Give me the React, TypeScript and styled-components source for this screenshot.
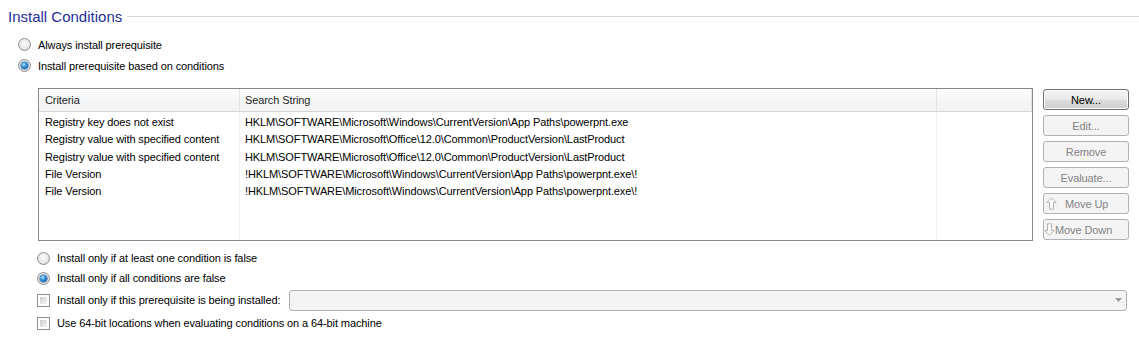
import React from "react";
import styled, { createGlobalStyle, css } from "styled-components";

const Global = createGlobalStyle`
  html, body { margin: 0; padding: 0; background: #ffffff; }
  body { font-family: "Liberation Sans", Arial, sans-serif; font-size: 11px; color: #000; letter-spacing: -0.1px; }
`;

const Page = styled.div`
  width: 1139px;
  height: 343px;
  overflow: hidden;
  background: #fff;
`;

const TitleRow = styled.div`
  display: flex;
  align-items: center;
  height: 32px;
  padding-left: 8px;
`;

const Title = styled.div`
  font-size: 15px;
  letter-spacing: 0;
  color: #26309a;
  white-space: nowrap;
`;

const TitleLine = styled.div`
  flex: 1;
  height: 1px;
  margin-left: 5px;
  background: #d5d5d5;
`;

const OptionGroup = styled.div<{ $indent: number; $top: number }>`
  display: flex;
  flex-direction: column;
  padding-left: ${(p) => p.$indent}px;
  padding-top: ${(p) => p.$top}px;
`;

const OptionRow = styled.label<{ $h: number }>`
  display: flex;
  align-items: center;
  height: ${(p) => p.$h}px;
  gap: 7px;
  white-space: nowrap;
`;

const ComboRow = styled(OptionRow)`
  width: 1090px;
`;

const RadioMark = styled.span<{ $checked?: boolean }>`
  box-sizing: border-box;
  width: 13px;
  height: 13px;
  border-radius: 50%;
  border: 1px solid #8c8e90;
  background: radial-gradient(circle at 50% 40%, #fbfbfb 0%, #e6e6e6 60%, #d0d0d0 100%);
  display: flex;
  align-items: center;
  justify-content: center;
  flex: none;
  ${(p) =>
    p.$checked &&
    css`
      &::after {
        content: "";
        width: 7px;
        height: 7px;
        border-radius: 50%;
        background: radial-gradient(circle at 40% 35%, #aee6ff 0%, #2a8ad4 45%, #0d4c8c 100%);
        box-shadow: 0 0 0 0.5px #1a4f85;
      }
    `}
`;

const CheckMark = styled.span`
  box-sizing: border-box;
  width: 13px;
  height: 13px;
  border: 1px solid #8e8f8f;
  background: #fff;
  padding: 2px;
  flex: none;
  display: flex;
  &::after {
    content: "";
    flex: 1;
    background: linear-gradient(135deg, #cbcbcb 0%, #e6e6e6 60%, #f4f4f4 100%);
  }
`;

const TableArea = styled.div`
  display: flex;
  gap: 10px;
  margin-top: 12px;
  padding-left: 38px;
  align-items: flex-start;
`;

const Table = styled.div`
  box-sizing: border-box;
  width: 995px;
  height: 153px;
  border: 1px solid #828790;
  display: grid;
  grid-template-columns: 201px 697px 1fr;
  grid-template-rows: 23px 1fr;
  background: #fff;
`;

const HeadCell = styled.div<{ $pad: number }>`
  display: flex;
  align-items: center;
  padding-left: ${(p) => p.$pad}px;
  background: linear-gradient(#ffffff 0%, #f7f8f9 40%, #f1f2f4 100%);
  border-bottom: 1px solid #d5d5d5;
  border-right: 1px solid #e2e3e5;
  color: #1e1e1e;
  &:last-of-type { border-right: none; }
`;

const BodyCol = styled.div<{ $pad: number; $last?: boolean }>`
  padding-top: 2px;
  padding-left: ${(p) => p.$pad}px;
  border-right: ${(p) => (p.$last ? "none" : "1px solid #edf1f7")};
  display: flex;
  flex-direction: column;
`;

const Cell = styled.div`
  height: 17.25px;
  line-height: 17px;
  white-space: nowrap;
`;

const ButtonCol = styled.div`
  display: flex;
  flex-direction: column;
  gap: 5px;
  margin-top: 1px;
`;

const Btn = styled.div<{ $enabled?: boolean; $lead?: number }>`
  box-sizing: border-box;
  width: 86px;
  height: 21px;
  border-radius: 3px;
  display: flex;
  align-items: center;
  justify-content: ${(p) => (p.$lead !== undefined ? "flex-start" : "center")};
  padding-left: ${(p) => p.$lead ?? 0}px;
  white-space: nowrap;
  ${(p) =>
    p.$enabled
      ? css`
          border: 1px solid #707070;
          background: linear-gradient(#f2f2f2 0%, #ebebeb 48%, #dddddd 52%, #cfcfcf 100%);
          color: #000;
          box-shadow: inset 0 0 0 1px #fcfcfc;
        `
      : css`
          border: 1px solid #adb2b5;
          background: #f4f4f4;
          color: #838383;
        `}
`;

const ArrowIcon = styled.svg<{ $gap: number }>`
  flex: none;
  margin-right: ${(p) => p.$gap}px;
`;

const Combo = styled.div`
  box-sizing: border-box;
  flex: 1;
  height: 21px;
  margin-left: 2px;
  border: 1px solid #adb2b5;
  border-radius: 3px;
  background: #f4f4f4;
  display: flex;
  align-items: center;
  justify-content: flex-end;
  padding-right: 4px;
`;

const UpArrow = () => (
  <ArrowIcon $gap={8} width="11" height="13" viewBox="0 0 11 13">
    <path d="M5.5 0.8 L10.2 5.5 L7.5 5.5 L7.5 12.2 L3.5 12.2 L3.5 5.5 L0.8 5.5 Z" fill="#fafafa" stroke="#b4b4b4" strokeWidth="1" />
  </ArrowIcon>
);

const DownArrow = () => (
  <ArrowIcon $gap={0} width="11" height="13" viewBox="0 0 11 13">
    <path d="M5.5 12.2 L10.2 7.5 L7.5 7.5 L7.5 0.8 L3.5 0.8 L3.5 7.5 L0.8 7.5 Z" fill="#fafafa" stroke="#b4b4b4" strokeWidth="1" />
  </ArrowIcon>
);

const ComboArrow = () => (
  <svg width="7" height="4" viewBox="0 0 7 4">
    <path d="M0 0 L7 0 L3.5 4 Z" fill="#9a9a9a" />
  </svg>
);

const rows = [
  ["Registry key does not exist", "HKLM\\SOFTWARE\\Microsoft\\Windows\\CurrentVersion\\App Paths\\powerpnt.exe"],
  ["Registry value with specified content", "HKLM\\SOFTWARE\\Microsoft\\Office\\12.0\\Common\\ProductVersion\\LastProduct"],
  ["Registry value with specified content", "HKLM\\SOFTWARE\\Microsoft\\Office\\12.0\\Common\\ProductVersion\\LastProduct"],
  ["File Version", "!HKLM\\SOFTWARE\\Microsoft\\Windows\\CurrentVersion\\App Paths\\powerpnt.exe\\!"],
  ["File Version", "!HKLM\\SOFTWARE\\Microsoft\\Windows\\CurrentVersion\\App Paths\\powerpnt.exe\\!"],
];

export default function App() {
  return (
    <Page>
      <Global />
      <TitleRow>
        <Title>Install Conditions</Title>
        <TitleLine />
      </TitleRow>
      <OptionGroup $indent={18} $top={2}>
        <OptionRow $h={21}>
          <RadioMark />
          Always install prerequisite
        </OptionRow>
        <OptionRow $h={21}>
          <RadioMark $checked />
          Install prerequisite based on conditions
        </OptionRow>
      </OptionGroup>
      <TableArea>
        <Table>
          <HeadCell $pad={6}>Criteria</HeadCell>
          <HeadCell $pad={5}>Search String</HeadCell>
          <HeadCell $pad={5} />
          <BodyCol $pad={6}>
            {rows.map((r, i) => (
              <Cell key={i}>{r[0]}</Cell>
            ))}
          </BodyCol>
          <BodyCol $pad={5}>
            {rows.map((r, i) => (
              <Cell key={i}>{r[1]}</Cell>
            ))}
          </BodyCol>
          <BodyCol $pad={5} $last />
        </Table>
        <ButtonCol>
          <Btn $enabled>New...</Btn>
          <Btn>Edit...</Btn>
          <Btn>Remove</Btn>
          <Btn>Evaluate...</Btn>
          <Btn $lead={2}>
            <UpArrow />
            Move Up
          </Btn>
          <Btn $lead={0}>
            <DownArrow />
            Move Down
          </Btn>
        </ButtonCol>
      </TableArea>
      <OptionGroup $indent={37} $top={7}>
        <OptionRow $h={20}>
          <RadioMark />
          Install only if at least one condition is false
        </OptionRow>
        <OptionRow $h={20}>
          <RadioMark $checked />
          Install only if all conditions are false
        </OptionRow>
        <ComboRow $h={24}>
          <CheckMark />
          Install only if this prerequisite is being installed:
          <Combo>
            <ComboArrow />
          </Combo>
        </ComboRow>
        <OptionRow $h={22}>
          <CheckMark />
          Use 64-bit locations when evaluating conditions on a 64-bit machine
        </OptionRow>
      </OptionGroup>
    </Page>
  );
}
